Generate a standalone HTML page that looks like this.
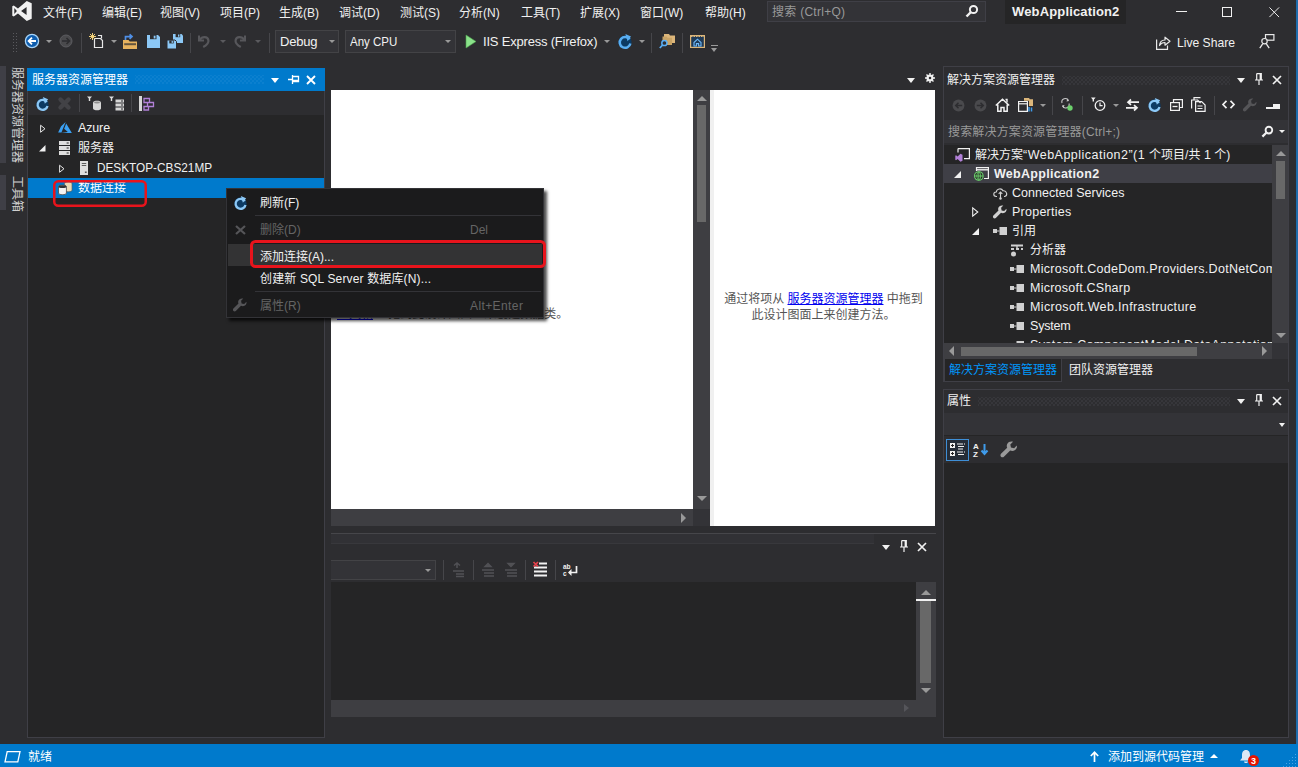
<!DOCTYPE html>
<html lang="zh-CN">
<head>
<meta charset="utf-8">
<title>WebApplication2 - Microsoft Visual Studio</title>
<style>
*{box-sizing:border-box;margin:0;padding:0}
html,body{width:1298px;height:767px;overflow:hidden;background:#2d2d30}
body{position:relative;font-family:"Liberation Sans","Noto Sans CJK SC",sans-serif;font-size:12px;color:#f1f1f1;line-height:1}
.abs{position:absolute}
.t{position:absolute;white-space:nowrap;line-height:16px;height:16px}
svg{position:absolute;overflow:visible}
/* ===== menu bar ===== */
#menubar .t{top:5px;font-size:12px;color:#f1f1f1}
#search{left:767px;top:1px;width:219px;height:21px;background:#333337;border:1px solid #3f3f46}
#search .t{left:4px;top:2px;color:#999}
#sln{left:1005px;top:0;width:121px;height:24px;background:#252526}
#sln .t{left:7px;top:4px;font-weight:bold;font-size:13px;color:#f1f1f1}
/* ===== toolbar ===== */
.combo{position:absolute;top:30px;height:23px;background:#333337;border:1px solid #434346}
.combo .t{left:4px;top:3px;font-size:13px;color:#f1f1f1}
.dd{position:absolute;width:0;height:0;border-left:3px solid transparent;border-right:3px solid transparent;border-top:3px solid #999}
.sep{position:absolute;width:1px;background:#46464a}
/* ===== panels ===== */
.panel{position:absolute;background:#252526;border:1px solid #3f3f46}
.ptitle{position:absolute;height:22px;font-size:12px}
.ptitle .t{top:3px}
.blue{background:#007acc}
/* tree */
.row{position:absolute;left:0;height:19px;width:100%}
.row .t{top:2px;font-size:12px;color:#f1f1f1}
.la{font-size:12.5px !important}
#soltree .t{margin-left:-1px}
.tri-c{position:absolute;width:0;height:0;border-top:4px solid transparent;border-bottom:4px solid transparent;border-left:5px solid #f1f1f1}
.tri-e{position:absolute;width:0;height:0;border-left:6px solid transparent;border-bottom:6px solid #f1f1f1}
/* context menu */
#ctx{left:226px;top:188px;width:318px;height:130px;background:#1b1b1c;border:1px solid #333337;box-shadow:3px 3px 3px rgba(0,0,0,.7)}
#ctx .t{font-size:12px}
#ctx .hl{position:absolute;left:1px;top:55px;width:314px;height:22px;background:#333334}
#ctx .line{position:absolute;left:28px;width:286px;height:1px;background:#333337}
.redbox{position:absolute;border:2px solid #e51400;border-radius:4px}
/* scrollbars */
.sb{position:absolute;background:#3e3e42}
.thumb{position:absolute;background:#686868}
.au{position:absolute;width:0;height:0;border-left:5px solid transparent;border-right:5px solid transparent;border-bottom:5px solid #999}
.ad{position:absolute;width:0;height:0;border-left:5px solid transparent;border-right:5px solid transparent;border-top:5px solid #999}
.al{position:absolute;width:0;height:0;border-top:5px solid transparent;border-bottom:5px solid transparent;border-right:5px solid #999}
.ar{position:absolute;width:0;height:0;border-top:5px solid transparent;border-bottom:5px solid transparent;border-left:5px solid #999}
a{color:#0000ee;text-decoration:underline}
.vt{transform-origin:0 0;transform:rotate(90deg);color:#d0d0d0;font-size:12px}
/* status */
#status{left:0;top:744px;width:1298px;height:23px;background:#007acc}
#status .t{top:5px;color:#fff;font-size:12px}
</style>
</head>
<body>

<!-- ================= MENU BAR ================= -->
<div id="menubar" class="abs" style="left:0;top:0;width:1298px;height:26px">
  <svg width="22" height="22" viewBox="0 0 24 24" style="left:11.2px;top:0.4px"><path fill="#f1f1f1" d="M17.2 1.2 22.6 3.6V20.4L17.2 22.8 7.6 14.6 3 18.1 1.4 17.2V6.8L3 5.9 7.6 9.4ZM17 7.6 11 12l6 4.4ZM3.6 8.8v6.4L6.4 12Z"/></svg>
  <span class="t" style="left:43px">文件(F)</span>
  <span class="t" style="left:102px">编辑(E)</span>
  <span class="t" style="left:160px">视图(V)</span>
  <span class="t" style="left:220px">项目(P)</span>
  <span class="t" style="left:279px">生成(B)</span>
  <span class="t" style="left:339px">调试(D)</span>
  <span class="t" style="left:400px">测试(S)</span>
  <span class="t" style="left:459px">分析(N)</span>
  <span class="t" style="left:521px">工具(T)</span>
  <span class="t" style="left:580px">扩展(X)</span>
  <span class="t" style="left:640px">窗口(W)</span>
  <span class="t" style="left:705px">帮助(H)</span>
  <div id="search" class="abs"><span class="t" style="letter-spacing:0.27px">搜索 (Ctrl+Q)</span>
    <svg width="14" height="14" viewBox="0 0 14 14" style="left:197px;top:2px"><circle cx="8.5" cy="5.5" r="3.6" fill="none" stroke="#f1f1f1" stroke-width="2"/><path d="M6 8 1.5 12.5" stroke="#f1f1f1" stroke-width="2.4"/></svg>
  </div>
  <div id="sln" class="abs"><span class="t" style="letter-spacing:0.15px">WebApplication2</span></div>
  <div class="abs" style="left:1176px;top:11px;width:11px;height:1px;background:#f1f1f1"></div>
  <div class="abs" style="left:1222px;top:7px;width:10px;height:10px;border:1px solid #f1f1f1"></div>
  <svg width="10.5" height="10.5" viewBox="0 0 12 12" style="left:1268.5px;top:6.7px"><path d="M0.5.5 11.5 11.5M11.5.5.5 11.5" stroke="#f1f1f1" stroke-width="1.1"/></svg>
</div>

<!-- ================= TOOLBAR ================= -->
<div id="toolbar" class="abs" style="left:0;top:27px;width:1298px;height:32px">
  <!-- grip -->
  <div class="abs" style="left:12px;top:5px;width:6px;height:21px;background-image:radial-gradient(circle,#5a5a5e 0.8px,transparent 1px);background-size:3px 3px"></div>
  <!-- back -->
  <svg width="16" height="16" viewBox="0 0 16 16" style="left:24px;top:6px"><circle cx="8" cy="8" r="6.6" fill="#0d5cad" stroke="#a8d4f8" stroke-width="1.3"/><path d="M12 8H5M8 4.6 4.6 8 8 11.4" fill="none" stroke="#fff" stroke-width="1.8"/></svg>
  <div class="dd" style="left:46px;top:13px"></div>
  <svg width="14" height="14" viewBox="0 0 14 14" style="left:59px;top:7px"><circle cx="7" cy="7" r="6" fill="#4a4a4d" stroke="#5c5c60" stroke-width="1"/><path d="M3 7h7M7.5 4 10.5 7 7.5 10" fill="none" stroke="#2d2d30" stroke-width="1.6"/></svg>
  <div class="sep" style="left:81px;top:6px;height:20px"></div>
  <!-- new project -->
  <svg width="16" height="16" viewBox="0 0 16 16" style="left:89px;top:6px"><path d="M5.5 5.5h6l2 2v7h-8z" fill="none" stroke="#e8e8e8" stroke-width="1.2"/><path d="M9 2.5h3.5v3" fill="none" stroke="#e8e8e8" stroke-width="1.2"/><path d="M3.5 0v7M0 3.5h7M1 1l5 5M6 1 1 6" stroke="#f3d27a" stroke-width="1"/></svg>
  <div class="dd" style="left:111px;top:13px"></div>
  <!-- open -->
  <svg width="17" height="16" viewBox="0 0 17 16" style="left:122px;top:7px"><path d="M1 15V6h5.500l1.200 1.500H15V15z" fill="#e6b25e"/><path d="M2.200 9.200H14v2H2.200z" fill="#2d2d30" opacity=".7"/><path d="M3.500 6V2.600h5.500M7.600 .4 10 2.600 7.600 4.800" fill="none" stroke="#4f8fe6" stroke-width="1.700"/></svg>
  <!-- save -->
  <svg width="13" height="13" viewBox="0 0 13 13" style="left:147px;top:8px"><path d="M0 0h11l2 2v11H0z" fill="#8cc8f6"/><rect x="3" y="0" width="6.5" height="4.2" fill="#2d2d30"/><rect x="6.7" y=".7" width="1.8" height="2.8" fill="#8cc8f6"/></svg>
  <!-- save all -->
  <svg width="16" height="15" viewBox="0 0 16 15" style="left:167px;top:7px"><path d="M6 0h8.5L16 1.5V9H6z" fill="#8cc8f6"/><rect x="8.6" y="0" width="4.6" height="3.2" fill="#2d2d30"/><rect x="11" y=".5" width="1.4" height="2.2" fill="#8cc8f6"/><path d="M0 6h8l1.5 1.5V15H0z" fill="#8cc8f6" stroke="#2d2d30" stroke-width="1"/><rect x="2.3" y="6.4" width="4.4" height="3" fill="#2d2d30"/><rect x="4.6" y="6.9" width="1.3" height="2" fill="#8cc8f6"/></svg>
  <div class="sep" style="left:190px;top:6px;height:20px"></div>
  <!-- undo -->
  <svg width="14" height="14" viewBox="0 0 14 14" style="left:197px;top:7px"><path d="M2 1.5v5h5" fill="none" stroke="#57575b" stroke-width="2"/><path d="M2.6 6C5 2.2 10.6 2 11.4 6.2 11.9 9 9.6 11.2 6.2 13" fill="none" stroke="#57575b" stroke-width="2.2"/></svg>
  <div class="dd" style="left:220px;top:13px;border-top-color:#5a5a5e"></div>
  <!-- redo -->
  <svg width="14" height="14" viewBox="0 0 14 14" style="left:233px;top:7px"><path d="M12 1.5v5H7" fill="none" stroke="#57575b" stroke-width="2"/><path d="M11.4 6C9 2.2 3.4 2 2.6 6.2 2.1 9 4.4 11.2 7.8 13" fill="none" stroke="#57575b" stroke-width="2.2"/></svg>
  <div class="dd" style="left:255px;top:13px;border-top-color:#5a5a5e"></div>
  <div class="sep" style="left:269px;top:6px;height:20px"></div>
  <div class="combo" style="left:275px;top:3px;width:64px"><span class="t" style="letter-spacing:-0.18px">Debug</span><div class="dd" style="left:53px;top:9px"></div></div>
  <div class="combo" style="left:345px;top:3px;width:111px"><span class="t" style="transform:scaleX(.886);transform-origin:0 0">Any CPU</span><div class="dd" style="left:99px;top:9px"></div></div>
  <!-- play -->
  <svg width="10" height="13" viewBox="0 0 10 13" style="left:466px;top:8px"><path d="M0 0 10 6.5 0 13z" fill="#8ae28a" stroke="#4ea64e" stroke-width=".6"/></svg>
  <span class="t" id="iis" style="left:483px;top:7px;font-size:13px;letter-spacing:-0.2px">IIS Express (Firefox)</span>
  <div class="dd" style="left:604px;top:13px"></div>
  <!-- refresh -->
  <svg width="14" height="15" viewBox="0 0 14 15" style="left:618px;top:7px"><circle cx="7" cy="8" r="6.6" fill="#0c3a63"/><path d="M11.6 5.4A5.4 5.4 0 1 0 12.4 9.6" fill="none" stroke="#59aef2" stroke-width="2.5"/><path d="M7.4 0 13 2.4 9.6 7.2z" fill="#59aef2"/></svg>
  <div class="dd" style="left:639px;top:13px"></div>
  <div class="sep" style="left:651px;top:6px;height:20px"></div>
  <!-- find in files -->
  <svg width="16" height="15" viewBox="0 0 16 15" style="left:659px;top:7px"><path d="M5 0h5l1 1.5H16V9H5z" fill="#dcb67a"/><path d="M3.5 2.5h4l1 1.3H13V11H3.500z" fill="#c9a466"/><circle cx="5.4" cy="9" r="2.6" fill="#2d2d30" stroke="#58aef5" stroke-width="1.5"/><path d="M3.6 11 .8 14" stroke="#58aef5" stroke-width="1.8"/></svg>
  <div class="sep" style="left:682px;top:6px;height:20px"></div>
  <!-- browser -->
  <svg width="15" height="13" viewBox="0 0 15 13" style="left:690px;top:8px"><rect x=".6" y=".6" width="13.8" height="11.8" fill="#1f3a57" stroke="#dcb67a" stroke-width="1.2"/><path d="M1 1h13" stroke="#dcb67a" stroke-width="2" stroke-dasharray="1.5 1"/><path d="M4 7.5 7.5 4.2 11 7.500V11H8.600V8.600H6.400V11H4z" fill="none" stroke="#6fb9f7" stroke-width="1.1"/></svg>
  <div class="abs" style="left:711px;top:18px;width:7px;height:1px;background:#9a9a9a"></div>
  <div class="dd" style="left:711px;top:21px;border-left-width:3.5px;border-right-width:3.5px;border-top-width:4px"></div>
  <!-- live share -->
  <svg width="15" height="15" viewBox="0 0 15 15" style="left:1156px;top:8px"><path d="M.6 4.500V14.400H11.500V10.500" fill="none" stroke="#e8e8e8" stroke-width="1.2"/><path d="M3.500 10.500C3.800 7 6 5 9 5V2.200L14 6.200 9 10.200V7.500C6.500 7.400 4.800 8.300 3.500 10.500z" fill="none" stroke="#e8e8e8" stroke-width="1.2" stroke-linejoin="round"/></svg>
  <span class="t" id="ls" style="left:1177px;top:8px;font-size:13px;transform:scaleX(.933);transform-origin:0 0">Live Share</span>
  <svg width="16" height="15" viewBox="0 0 16 15" style="left:1259px;top:7px"><rect x="6.500" y=".6" width="8.400" height="5.600" fill="none" stroke="#e8e8e8" stroke-width="1.2"/><circle cx="5.500" cy="7.200" r="2.700" fill="#2d2d30" stroke="#e8e8e8" stroke-width="1.2"/><path d="M.8 14.200 3.800 9.600M10.200 14.200 7.200 9.600" stroke="#e8e8e8" stroke-width="1.300"/></svg>
</div>

<!-- ================= LEFT STRIP ================= -->
<div id="leftstrip" class="abs" style="left:0;top:60px;width:27px;height:684px">
  <div class="abs" style="left:0;top:6px;width:6px;height:97px;background:#3f3f46"></div>
  <div class="abs" style="left:0;top:115px;width:6px;height:35px;background:#3f3f46"></div>
  <span class="t vt" style="left:25px;top:7px">服务器资源管理器</span>
  <span class="t vt" style="left:25px;top:116px">工具箱</span>
</div>

<!-- ================= SERVER EXPLORER ================= -->
<div id="srv" class="abs" style="left:27px;top:68px;width:298px;height:670px;background:#252526;border:1px solid #3f3f46;border-top:none">
  <div class="abs blue" style="left:-1px;top:0;width:298px;height:23px">
    <span class="t" style="left:5px;top:4px;color:#fff">服务器资源管理器</span>
    <div class="abs" style="left:108px;top:7px;width:129px;height:9px;background-image:radial-gradient(circle,#3595dc 0.55px,transparent 0.75px),radial-gradient(circle,#3595dc 0.55px,transparent 0.75px);background-size:4px 4px;background-position:0 0,2px 2px"></div>
    <div class="abs" style="left:244px;top:10px;width:0;height:0;border-left:4.500px solid transparent;border-right:4.500px solid transparent;border-top:5px solid #fff"></div>
    <svg width="11" height="9" viewBox="0 0 11 9" style="left:261px;top:7px"><path d="M0 4.500H4M4.500 0v9M4.500 1.500H10.500V6.500H4.500M4.500 5.500H10.500" fill="none" stroke="#fff" stroke-width="1.300"/></svg>
    <svg width="10" height="10" viewBox="0 0 10 10" style="left:279px;top:7px"><path d="M1 1 9 9M9 1 1 9" stroke="#fff" stroke-width="1.900"/></svg>
  </div>
  <!-- toolbar -->
  <div class="abs" style="left:0;top:23px;width:296px;height:24px;background:#2d2d30">
    <svg width="13" height="14" viewBox="0 0 14 15" style="left:8px;top:6px"><circle cx="7" cy="8" r="6.600" fill="#0c3a63"/><path d="M11.600 5.400A5.400 5.400 0 1 0 12.400 9.600" fill="none" stroke="#8cc8f6" stroke-width="2.500"/><path d="M7.400 0 13 2.400 9.600 7.200z" fill="#8cc8f6"/></svg>
    <svg width="13" height="13" viewBox="0 0 13 13" style="left:30px;top:6px"><path d="M2.500 2.500 10.500 10.500M10.500 2.500 2.500 10.500" stroke="#424246" stroke-width="4.4" stroke-linecap="round"/></svg>
    <div class="sep" style="left:51px;top:3px;height:18px"></div>
    <svg width="16" height="15" viewBox="0 0 16 15" style="left:59px;top:5px"><path d="M0 .5h5L3.200 2.600V5H1.800V2.600z" fill="#e0e0e0"/><path d="M6 6.500c0-2.400 8-2.400 8 0V12.500c0 2.400-8 2.400-8 0z" fill="#d6d6d6"/><ellipse cx="10" cy="6.600" rx="3" ry="1" fill="#8e8e8e"/></svg>
    <svg width="16" height="15" viewBox="0 0 16 15" style="left:81px;top:5px"><path d="M0 .5h5L3.200 2.600V5H1.800V2.600z" fill="#e0e0e0"/><path d="M6.500 3.500h8.500v3H6.500zM6.500 7.500h8.500v3H6.500zM6.500 11.500h8.500v3H6.500z" fill="#d6d6d6"/><path d="M12 5h2M12 9h2M12 13h2" stroke="#2d2d30" stroke-width="1"/></svg>
    <div class="sep" style="left:103px;top:3px;height:18px"></div>
    <svg width="16" height="15" viewBox="0 0 16 15" style="left:111px;top:5px"><rect x="0" y="0" width="3" height="15" fill="#d6d6d6"/><path d="M5 2.500h5.500v4H5zM8.500 6.500h6v4h-6zM5 10.500h4.500v3.500H5z" fill="none" stroke="#b180d7" stroke-width="1.300"/></svg>
  </div>
  <!-- tree -->
  <div class="abs" id="srvtree" style="left:0;top:50px;width:296px;height:100px">
    <div class="row" style="top:0"><svg width="6" height="9.500" viewBox="0 0 7 10" style="left:12px;top:5.500px"><path d="M.7.900 5.800 5 .7 9.100z" fill="none" stroke="#f1f1f1" stroke-width="1.100"/></svg>
      <svg width="14" height="11" viewBox="0 0 15 12" style="left:30px;top:4px"><path d="M8.200 0 3.200 4.600 0 11.400h3.600L8.200 0zM8.800 1.600 6.600 7.400l4 3.400-7.400 1.200H15z" fill="#3aa0f3"/></svg>
      <span class="t la" style="left:50px;letter-spacing:-0.14px">Azure</span></div>
    <div class="row" style="top:20px"><svg width="6.500" height="6.500" viewBox="0 0 7 7" style="left:11px;top:6.500px"><path d="M7 0V7H0z" fill="#f1f1f1"/></svg>
      <svg width="11" height="14" viewBox="0 0 13 14" preserveAspectRatio="none" style="left:31px;top:3px"><path d="M0 0h13v4H0zM0 5h13v4H0zM0 10h13v4H0z" fill="#dedede"/><path d="M9 2h2.500M9 7h2.500M9 12h2.500" stroke="#252526" stroke-width="1.200"/></svg>
      <span class="t" style="left:50px">服务器</span></div>
    <div class="row" style="top:40px"><svg width="6" height="9.500" viewBox="0 0 7 10" style="left:31px;top:5.500px"><path d="M.7.900 5.800 5 .7 9.100z" fill="none" stroke="#f1f1f1" stroke-width="1.100"/></svg>
      <svg width="8" height="14" viewBox="0 0 9 14" preserveAspectRatio="none" style="left:52px;top:3px"><rect width="9" height="14" fill="#dedede"/><path d="M2 2.500h5M2 4.500h5" stroke="#555" stroke-width="1"/><rect x="5.500" y="10.500" width="2" height="1.500" fill="#555"/></svg>
      <span class="t la" style="left:69px;transform:scaleX(.943);transform-origin:0 0">DESKTOP-CBS21MP</span></div>
    <div class="row blue" style="top:60px;height:20px">
      <svg width="15" height="13" viewBox="0 0 16 14" style="left:29.500px;top:4px"><path d="M7 1.600c0-2 8-2 8 0V9c0 2-8 2-8 0z" fill="#e8d9b5" stroke="#5a5a5a" stroke-width=".7"/><path d="M.5 5c0-2.200 8.500-2.200 8.500 0v7c0 2.200-8.500 2.200-8.500 0z" fill="#f3f3f3" stroke="#4a4a4a" stroke-width=".9"/><ellipse cx="4.750" cy="5" rx="4.250" ry="1.500" fill="#333" /></svg>
      <span class="t" style="left:50px;color:#fff">数据连接</span></div>
  </div>
</div>
<svg width="94" height="27" style="left:53px;top:180px"><rect x="1.25" y="1.25" width="91.5" height="24.5" rx="4" fill="none" stroke="#e8141c" stroke-width="2.5"/></svg>

<!-- ================= CENTER ================= -->
<div id="center" class="abs" style="left:331px;top:68px;width:605px;height:460px">
  <div class="abs" style="left:576px;top:10px;width:0;height:0;border-left:4.500px solid transparent;border-right:4.500px solid transparent;border-top:5px solid #f1f1f1"></div>
  <svg width="10" height="10" viewBox="0 0 12 12" style="left:593.5px;top:5.3px"><circle cx="6" cy="6" r="3.200" fill="none" stroke="#f1f1f1" stroke-width="2.200"/><path d="M6 0v12M0 6h12M1.800 1.800l8.400 8.400M10.200 1.800 1.800 10.200" stroke="#f1f1f1" stroke-width="1.700"/><circle cx="6" cy="6" r="1.500" fill="#2d2d30"/></svg>
  <!-- left white pane -->
  <div class="abs" style="left:0;top:22px;width:362px;height:419px;background:#fff;color:#555;font-size:12px">
    <div class="abs" style="left:6px;top:168px;width:350px;line-height:16px;white-space:nowrap">对象关系设计器允许你在代码中<br>将数据类可视化。<br>通过将项从 <a>服务器资源管理器</a> 或<br><a>工具箱</a> <span id="lastline" style="margin-left:12px">拖到此设计图面上来创建数据类。</span></div>
  </div>
  <!-- v scrollbar -->
  <div class="sb" style="left:362px;top:22px;width:17px;height:419px">
    <div class="au" style="left:3.500px;top:6px"></div>
    <div class="thumb" style="left:4px;top:15px;width:9px;height:117px"></div>
    <div class="ad" style="left:3.500px;top:406px"></div>
  </div>
  <!-- h scrollbar -->
  <div class="sb" style="left:0;top:441px;width:362px;height:17px"><div class="ar" style="left:350px;top:3.500px"></div></div>
  <div class="abs" style="left:362px;top:441px;width:17px;height:17px;background:#333337"></div>
  <!-- right white pane -->
  <div class="abs" style="left:379px;top:22px;width:225px;height:436px;background:#fff;color:#555;font-size:12px;text-align:center;border-left:4px solid #f0f0f0">
    <div class="abs" style="left:-1.5px;top:202px;width:222px;line-height:15.500px;white-space:nowrap;text-align:center">通过将项从 <a>服务器资源管理器</a> 中拖到<br>此设计图面上来创建方法。</div>
  </div>
</div>

<!-- ================= OUTPUT ================= -->
<div id="output" class="abs" style="left:331px;top:533px;width:605px;height:205px;border-top:1px solid #46464a">
  <div class="abs" style="left:0;top:0;width:543px;height:10px;background:#313135;border-bottom:1px solid #38383c"></div>
  <div class="abs" style="left:0;top:1px;width:605px;height:203px">
    <div class="abs" style="left:551px;top:10px;width:0;height:0;border-left:4.500px solid transparent;border-right:4.500px solid transparent;border-top:5px solid #f1f1f1"></div>
    <svg width="8" height="12" viewBox="0 0 8 12" style="left:569px;top:5px"><path d="M1.700 .6h4.600v6.200M1.700 .6v6.200M5.200 .6v6.200M0 7h8M4 7v5" fill="none" stroke="#f1f1f1" stroke-width="1.200"/></svg>
    <svg width="10" height="10" viewBox="0 0 10 10" style="left:586px;top:7px"><path d="M1 1 9 9M9 1 1 9" stroke="#f1f1f1" stroke-width="1.700"/></svg>
  <!-- toolbar -->
  <div class="abs" style="left:0;top:25px;width:105px;height:20px;background:#333337;border:1px solid #434346;border-left:none"><div class="dd" style="left:94px;top:8px"></div></div>
  <div class="sep" style="left:112px;top:25px;height:20px"></div>
  <svg width="13" height="15" viewBox="0 0 13 15" style="left:121px;top:27px"><path d="M2 3.500 5 1 8 3.500M5 1v5M1 9h11M4 12h8M4 14.500h8" fill="none" stroke="#515155" stroke-width="1.500"/></svg>
  <div class="sep" style="left:142px;top:25px;height:20px"></div>
  <svg width="12" height="15" viewBox="0 0 12 15" style="left:151px;top:27px"><path d="M3 4.500 6 1.500 9 4.500zM0 8h12M2 11h10M2 14h10" fill="#515155" stroke="#515155" stroke-width="1.400"/></svg>
  <svg width="12" height="15" viewBox="0 0 12 15" style="left:174px;top:27px"><path d="M3 1.500 6 4.500 9 1.500zM0 8h12M2 11h10M2 14h10" fill="#515155" stroke="#515155" stroke-width="1.400"/></svg>
  <div class="sep" style="left:194px;top:25px;height:20px"></div>
  <svg width="14" height="15" viewBox="0 0 14 15" style="left:202px;top:27px"><path d="M6 1.500h8M1 5.500h13M1 9.500h13M1 13.500h13" stroke="#f1f1f1" stroke-width="2"/><path d="M.5 0 5 4.500M5 0 .5 4.500" stroke="#e8414b" stroke-width="1.700"/></svg>
  <div class="sep" style="left:224px;top:25px;height:20px"></div>
  <svg width="15" height="13" viewBox="0 0 15 13" style="left:232px;top:29px"><text x="0" y="5" font-size="6.500" font-weight="bold" font-family="Liberation Sans, sans-serif" fill="#f1f1f1">ab</text><text x="0" y="11.500" font-size="6.500" font-weight="bold" font-family="Liberation Sans, sans-serif" fill="#f1f1f1">c</text><path d="M13.500 2v6.500H6" fill="none" stroke="#f1f1f1" stroke-width="1.700"/><path d="M8.500 5 5 8.500 8.500 12z" fill="#f1f1f1"/></svg>
  <!-- content -->
  <div class="abs" style="left:0;top:47px;width:585px;height:118px;background:#252526"></div>
  <div class="sb" style="left:585px;top:47px;width:20px;height:118px">
    <div class="au" style="left:5px;top:8px"></div>
    <div class="abs" style="left:0;top:17px;width:20px;height:2px;background:#f1f1f1"></div>
    <div class="thumb" style="left:4px;top:19px;width:11px;height:82px"></div>
    <div class="ad" style="left:5px;top:106px"></div>
  </div>
  <div class="sb" style="left:0;top:165px;width:605px;height:17px"><div class="ar" style="left:573px;top:4px;border-left-color:#55555a;border-top-width:4.500px;border-bottom-width:4.500px"></div></div>
</div>
</div>

<!-- ================= SOLUTION EXPLORER ================= -->
<div id="sol" class="abs" style="left:943px;top:66px;width:346px;height:316px;border:1px solid #3f3f46;border-bottom:none">
  <span class="t" style="left:3px;top:5px">解决方案资源管理器</span>
  <div class="abs" style="left:118px;top:9px;width:168px;height:9px;background-image:radial-gradient(circle,#414146 0.6px,transparent 0.8px),radial-gradient(circle,#414146 0.6px,transparent 0.8px);background-size:4px 4px;background-position:0 0,2px 2px"></div>
    <div class="abs" style="left:293px;top:11px;width:0;height:0;border-left:4.500px solid transparent;border-right:4.500px solid transparent;border-top:5px solid #f1f1f1"></div>
    <svg width="8" height="12" viewBox="0 0 8 12" style="left:311px;top:6px"><path d="M1.700 .6h4.600v6.200M1.700 .6v6.200M5.200 .6v6.200M0 7h8M4 7v5" fill="none" stroke="#f1f1f1" stroke-width="1.200"/></svg>
    <svg width="10" height="10" viewBox="0 0 10 10" style="left:328px;top:8px"><path d="M1 1 9 9M9 1 1 9" stroke="#f1f1f1" stroke-width="1.700"/></svg>
  <!-- toolbar -->
  <div class="abs" id="soltb" style="left:0;top:25px;width:344px;height:26px">
    <svg width="13" height="13" viewBox="0 0 14 14" style="left:8px;top:6.500px"><circle cx="7" cy="7" r="6.400" fill="#4a4a4d"/><path d="M11 7H4M7 4 4 7 7 10" fill="none" stroke="#2d2d30" stroke-width="1.600"/></svg>
    <svg width="13" height="13" viewBox="0 0 14 14" style="left:30px;top:6.500px"><circle cx="7" cy="7" r="6.400" fill="#4a4a4d"/><path d="M3 7h7M7 4 10 7 7 10" fill="none" stroke="#2d2d30" stroke-width="1.600"/></svg>
    <svg width="15" height="14" viewBox="0 0 15 14" style="left:51px;top:6px"><path d="M.8 7.500 7.500 1.200 14.200 7.500M2.800 6.500V13.300H6V9.500H9V13.300H12.200V6.500" fill="none" stroke="#f1f1f1" stroke-width="1.500"/><path d="M10.500 1.500h1.500v3" stroke="#f1f1f1" stroke-width="1.400" fill="none"/></svg>
    <svg width="15" height="14" viewBox="0 0 15 14" style="left:74px;top:6px"><path d="M.6 3.500h8.800V13.400H.6z" fill="none" stroke="#f1f1f1" stroke-width="1.200"/><path d="M.6 5.800h8.800" stroke="#f1f1f1" stroke-width="1.200"/><path d="M6 0h5l.8 1.200H15V8h-4V2.800H6z" fill="#dcb67a"/><path d="M11 9v4.500M13.500 9.500v4" stroke="#3f9bea" stroke-width="1.500"/></svg>
    <div class="dd" style="left:96px;top:12px"></div>
    <div class="sep" style="left:108px;top:4px;height:19px"></div>
    <svg width="13" height="14" viewBox="0 0 13 14" style="left:116px;top:5px"><path d="M2 6A3.500 3.500 0 0 1 8.500 3.500M9 6.500A3.500 3.500 0 0 1 2.500 9" fill="none" stroke="#c8c8c8" stroke-width="1.100"/><path d="M7.500 1.500 9 4 6.500 4.500zM3.500 11 2 8.500 4.500 8z" fill="#c8c8c8"/><circle cx="10" cy="11" r="2.700" fill="#6cd16c"/></svg>
    <div class="sep" style="left:138px;top:4px;height:19px"></div>
    <svg width="15" height="14" viewBox="0 0 15 14" style="left:147px;top:5px"><path d="M0 .600h4.600L3 2.400V4.400H1.600V2.400z" fill="#f1f1f1"/><circle cx="9" cy="8.500" r="4.800" fill="none" stroke="#f1f1f1" stroke-width="1.300"/><path d="M9 5.500v3.200h2.600" fill="none" stroke="#f1f1f1" stroke-width="1.200"/></svg>
    <div class="dd" style="left:169px;top:12px"></div>
    <svg width="13" height="12" viewBox="0 0 13 12" style="left:182px;top:7px"><path d="M13 3.200H2.500M5 .5 2 3.200 5 5.900M0 8.800H10.500M8 6.100 11 8.800 8 11.500" fill="none" stroke="#f1f1f1" stroke-width="1.700"/></svg>
    <svg width="13" height="14" viewBox="0 0 14 15" style="left:204px;top:6px"><circle cx="7" cy="8" r="6.600" fill="#0c3a63"/><path d="M11.600 5.400A5.400 5.400 0 1 0 12.400 9.600" fill="none" stroke="#8cc8f6" stroke-width="2.500"/><path d="M7.400 0 13 2.400 9.600 7.200z" fill="#8cc8f6"/></svg>
    <svg width="13" height="12" viewBox="0 0 13 12" style="left:226px;top:7px"><path d="M3.500 3.500V.6H12.400V8.500H9.500" fill="none" stroke="#f1f1f1" stroke-width="1.200"/><rect x=".6" y="3.600" width="8.800" height="7.800" fill="none" stroke="#f1f1f1" stroke-width="1.200"/><path d="M2.500 7.500h5" stroke="#f1f1f1" stroke-width="1.300"/></svg>
    <svg width="15" height="15" viewBox="0 0 15 15" style="left:247px;top:5px"><path d="M3 3V.600H9.500M.6 11.500V3h6l3 3" fill="none" stroke="#f1f1f1" stroke-width="1.200"/><path d="M4.600 4.600h6l3.500 3.500v6.300H4.600z" fill="none" stroke="#f1f1f1" stroke-width="1.200"/><path d="M6.500 9h5M6.500 11.500h5" stroke="#f1f1f1" stroke-width="1"/></svg>
    <div class="sep" style="left:270px;top:4px;height:19px"></div>
    <svg width="13" height="9" viewBox="0 0 13 9" style="left:278px;top:8px"><path d="M4.500 .8 1 4.500 4.500 8.200M8.500 .8 12 4.500 8.500 8.200" fill="none" stroke="#f1f1f1" stroke-width="1.700"/></svg>
    <svg width="14" height="14" viewBox="0 0 14 14" style="left:299px;top:6px"><path d="M13.400 3.700 11.200 5.900 8.600 5.400 8.100 2.800 10.300 .6C8.500 0 6.400.600 5.500 2.400 5 3.500 5.100 4.600 5.500 5.500L.4 10.600C-.2 11.200-.2 12.300.4 13 1.100 13.600 2.200 13.600 2.800 13L8 7.800C9.200 8.400 10.800 8.300 12 7.400 13.300 6.500 13.800 5 13.400 3.700z" fill="#555558"/></svg>
    <div class="abs" style="left:322px;top:15px;width:8px;height:2px;background:#f1f1f1"></div>
    <div class="abs" style="left:329px;top:12px;width:7px;height:5px;background:#f1f1f1"></div>
  </div>
  <!-- search -->
  <div class="abs" style="left:0;top:53px;width:344px;height:23px;background:#333337">
    <span class="t" id="solsearch" style="left:4px;top:4px;color:#999;letter-spacing:0.16px">搜索解决方案资源管理器(Ctrl+;)</span>
    <svg width="13" height="13" viewBox="0 0 14 14" style="left:317px;top:5px"><circle cx="8.500" cy="5.500" r="3.600" fill="none" stroke="#f1f1f1" stroke-width="2"/><path d="M6 8 1.500 12.500" stroke="#f1f1f1" stroke-width="2.400"/></svg>
    <div class="dd" style="left:335px;top:10px;border-top-color:#f1f1f1"></div>
  </div>
  <!-- tree -->
  <div class="abs" id="soltree" style="left:0;top:78px;width:328px;height:198px;background:#252526;overflow:hidden">
    <div class="row" style="top:0"><svg width="15" height="14" viewBox="0 0 15 14" style="left:11px;top:3px"><path d="M3 .600h11.400v10H9" fill="none" stroke="#f1f1f1" stroke-width="1.200"/><path d="M3 .600v4" stroke="#f1f1f1" stroke-width="1.200"/><path d="M5.500 5.800 7.500 6.700V12.800L5.500 13.700 2.600 11 1 12.200.3 11.800V7.700L1 7.300 2.600 8.500z" fill="#b180d7"/></svg>
      <span class="t" id="s0" style="left:32px">解决方案<span class="la" style="letter-spacing:0.48px">“WebApplication2”(1 </span>个项目/共<span class="la"> 1 </span>个)</span></div>
    <div class="row" style="top:19px;background:#3f3f46"><svg width="7" height="7" viewBox="0 0 7 7" style="left:10px;top:7px"><path d="M7 0V7H0z" fill="#f1f1f1"/></svg>
      <svg width="15" height="14" viewBox="0 0 15 14" style="left:30px;top:3px"><path d="M2.500 4V.600H14.400V11.500H10" fill="none" stroke="#f1f1f1" stroke-width="1.200"/><path d="M2.500 2.800H14" stroke="#f1f1f1" stroke-width="1.400"/><circle cx="4.800" cy="9" r="4.300" fill="#252526" stroke="#6cd16c" stroke-width="1.100"/><path d="M.5 9h8.600M4.800 4.700v8.600M4.800 4.700c-2.600 2-2.600 6.600 0 8.600M4.800 4.700c2.600 2 2.600 6.600 0 8.600" fill="none" stroke="#6cd16c" stroke-width=".9"/></svg>
      <span class="t la" id="s1" style="left:51px;font-weight:bold;letter-spacing:0.28px">WebApplication2</span></div>
    <div class="row" style="top:38px"><svg width="15" height="13" viewBox="0 0 15 13" style="left:49px;top:4px"><path d="M4 9.500H3.200C-.3 9.200.2 4.800 3.300 5 3.600 1.600 8.500.6 10 3.800 13.800 3.200 15.200 8.500 11.600 9.500H11" fill="none" stroke="#d0d0d0" stroke-width="1.100"/><path d="M7.500 5v6M5.700 6.800 7.500 5 9.300 6.800" fill="none" stroke="#d0d0d0" stroke-width="1.100"/><circle cx="7.500" cy="11.500" r="1.200" fill="#d0d0d0"/></svg>
      <span class="t la" id="s2" style="left:69px;letter-spacing:0.03px">Connected Services</span></div>
    <div class="row" style="top:57px"><svg width="7" height="10" viewBox="0 0 7 10" style="left:28px;top:5px"><path d="M.7.900 5.800 5 .7 9.100z" fill="none" stroke="#f1f1f1" stroke-width="1.100"/></svg>
      <svg width="14" height="14" viewBox="0 0 14 14" style="left:49px;top:3px"><path d="M13.400 3.700 11.200 5.900 8.600 5.400 8.100 2.800 10.300 .6C8.500 0 6.400.600 5.500 2.400 5 3.500 5.100 4.600 5.500 5.500L.4 10.600C-.2 11.200-.2 12.300.4 13 1.100 13.600 2.200 13.600 2.800 13L8 7.800C9.200 8.400 10.800 8.300 12 7.400 13.300 6.500 13.800 5 13.400 3.700z" fill="#d0d0d0"/></svg>
      <span class="t la" id="s3" style="left:69px;letter-spacing:0.25px">Properties</span></div>
    <div class="row" style="top:76px"><svg width="7" height="7" viewBox="0 0 7 7" style="left:28px;top:7px"><path d="M7 0V7H0z" fill="#f1f1f1"/></svg>
      <svg width="14" height="8" viewBox="0 0 14 8" style="left:49px;top:6px"><rect x="0" y="2" width="4" height="4" fill="#d0d0d0"/><rect x="4" y="3.500" width="2.500" height="1" fill="#d0d0d0"/><rect x="6.500" y="0" width="7.500" height="8" fill="#d0d0d0"/></svg>
      <span class="t" style="left:69px">引用</span></div>
    <div class="row" style="top:95px"><svg width="14" height="13" viewBox="0 0 14 13" style="left:66px;top:4px"><path d="M1 1.500h12M1 5h3M6 5h3M11 5h2" stroke="#d0d0d0" stroke-width="2.200"/><circle cx="3.500" cy="10" r="2.500" fill="#d0d0d0"/><path d="M7 1.500v3.500" stroke="#d0d0d0" stroke-width="1.400"/></svg>
      <span class="t" style="left:87px">分析器</span></div>
    <div class="row" style="top:114px"><svg width="14" height="8" viewBox="0 0 14 8" style="left:66px;top:6px"><rect x="0" y="2" width="4" height="4" fill="#d0d0d0"/><rect x="4" y="3.500" width="2.500" height="1" fill="#d0d0d0"/><rect x="6.500" y="0" width="7.500" height="8" fill="#d0d0d0"/></svg><span class="t la" id="s6" style="left:87px;letter-spacing:0.3px">Microsoft.CodeDom.Providers.DotNetCompilerPlatform</span></div>
    <div class="row" style="top:133px"><svg width="14" height="8" viewBox="0 0 14 8" style="left:66px;top:6px"><rect x="0" y="2" width="4" height="4" fill="#d0d0d0"/><rect x="4" y="3.500" width="2.500" height="1" fill="#d0d0d0"/><rect x="6.500" y="0" width="7.500" height="8" fill="#d0d0d0"/></svg><span class="t la" id="s7" style="left:87px;letter-spacing:0.24px">Microsoft.CSharp</span></div>
    <div class="row" style="top:152px"><svg width="14" height="8" viewBox="0 0 14 8" style="left:66px;top:6px"><rect x="0" y="2" width="4" height="4" fill="#d0d0d0"/><rect x="4" y="3.500" width="2.500" height="1" fill="#d0d0d0"/><rect x="6.500" y="0" width="7.500" height="8" fill="#d0d0d0"/></svg><span class="t la" id="s8" style="left:87px;letter-spacing:0.35px">Microsoft.Web.Infrastructure</span></div>
    <div class="row" style="top:171px"><svg width="14" height="8" viewBox="0 0 14 8" style="left:66px;top:6px"><rect x="0" y="2" width="4" height="4" fill="#d0d0d0"/><rect x="4" y="3.500" width="2.500" height="1" fill="#d0d0d0"/><rect x="6.500" y="0" width="7.500" height="8" fill="#d0d0d0"/></svg><span class="t la" id="s9" style="left:87px;letter-spacing:-0.2px">System</span></div>
    <div class="row" style="top:190px"><svg width="14" height="8" viewBox="0 0 14 8" style="left:66px;top:6px"><rect x="0" y="2" width="4" height="4" fill="#d0d0d0"/><rect x="4" y="3.500" width="2.500" height="1" fill="#d0d0d0"/><rect x="6.500" y="0" width="7.500" height="8" fill="#d0d0d0"/></svg><span class="t la" id="s10" style="left:87px;letter-spacing:0.3px">System.ComponentModel.DataAnnotations</span></div>
  </div>
  <div class="sb" style="left:328px;top:78px;width:16px;height:198px">
    <div class="au" style="left:3.500px;top:6px"></div>
    <div class="thumb" style="left:4px;top:16px;width:9px;height:38px"></div>
    <div class="ad" style="left:3.500px;top:188px"></div>
  </div>
  <div class="sb" style="left:0;top:276px;width:328px;height:16px">
    <div class="al" style="left:5px;top:3px"></div>
    <div class="thumb" style="left:17px;top:4px;width:236px;height:9px"></div>
    <div class="ar" style="left:318px;top:3px"></div>
  </div>
  <div class="abs" style="left:328px;top:276px;width:16px;height:16px;background:#333337"></div>
  <!-- tabs -->
  <div class="abs" style="left:0;top:292px;width:118px;height:23px;background:#252526;border:1px solid #3f3f46;border-top:none"><span class="t" style="left:4px;top:3px;color:#0097fb">解决方案资源管理器</span></div>
  <span class="t" style="left:125px;top:295px">团队资源管理器</span>
</div>

<!-- ================= PROPERTIES ================= -->
<div id="props" class="abs" style="left:943px;top:389px;width:346px;height:349px;border:1px solid #3f3f46;background:#252526">
  <div class="abs" style="left:0;top:0;width:344px;height:23px;background:#2d2d30"></div>
  <span class="t" style="left:3px;top:3px">属性</span>
  <div class="abs" style="left:34px;top:7px;width:252px;height:9px;background-image:radial-gradient(circle,#414146 0.6px,transparent 0.8px),radial-gradient(circle,#414146 0.6px,transparent 0.8px);background-size:4px 4px;background-position:0 0,2px 2px"></div>
    <div class="abs" style="left:293px;top:9px;width:0;height:0;border-left:4.500px solid transparent;border-right:4.500px solid transparent;border-top:5px solid #f1f1f1"></div>
    <svg width="8" height="12" viewBox="0 0 8 12" style="left:311px;top:4px"><path d="M1.700 .6h4.600v6.200M1.700 .6v6.200M5.200 .6v6.200M0 7h8M4 7v5" fill="none" stroke="#f1f1f1" stroke-width="1.200"/></svg>
    <svg width="10" height="10" viewBox="0 0 10 10" style="left:328px;top:6px"><path d="M1 1 9 9M9 1 1 9" stroke="#f1f1f1" stroke-width="1.700"/></svg>
  <div class="abs" style="left:0;top:23px;width:344px;height:22px;background:#333337"><div class="dd" style="left:335px;top:10px;border-top-color:#f1f1f1;border-left-width:3.500px;border-right-width:3.500px;border-top-width:4px"></div></div>
  <div class="abs" style="left:0;top:46px;width:344px;height:27px;background:#2d2d30">
    <div class="abs" style="left:2px;top:3px;width:23px;height:22px;border:1px solid #3f8fd6;background:#252d38"></div>
    <svg width="16" height="14" viewBox="0 0 16 14" style="left:6px;top:7px"><rect x="0" y="0" width="5" height="5" fill="#f1f1f1"/><rect x="0" y="8" width="5" height="5" fill="#f1f1f1"/><path d="M1 2.500h3M2.500 1v3M1 10.500h3M2.500 9v3" stroke="#252526" stroke-width="1"/><path d="M7 1h8M8 3.500h7M8 6h5M7 9h8M8 11.500h7" stroke="#f1f1f1" stroke-width="1.200" stroke-dasharray="6 1"/></svg>
    <svg width="16" height="15" viewBox="0 0 16 15" style="left:29px;top:6px"><text x="0" y="6.500" font-size="8" font-weight="bold" font-family="Liberation Sans, sans-serif" fill="#f1f1f1">A</text><text x="0" y="14.500" font-size="8" font-weight="bold" font-family="Liberation Sans, sans-serif" fill="#f1f1f1">Z</text><path d="M11.500 2v9M8.500 8.500 11.500 12 14.500 8.500" fill="none" stroke="#3f9bea" stroke-width="2"/></svg>
    <svg width="18" height="17" viewBox="0 0 14 14" style="left:56px;top:5px"><path d="M13.400 3.700 11.200 5.900 8.600 5.400 8.100 2.800 10.300 .6C8.500 0 6.400.600 5.500 2.400 5 3.500 5.100 4.600 5.500 5.500L.4 10.600C-.2 11.200-.2 12.300.4 13 1.100 13.600 2.200 13.600 2.800 13L8 7.800C9.200 8.400 10.800 8.300 12 7.400 13.300 6.500 13.800 5 13.400 3.700z" fill="#9a9a9a"/></svg>
  </div>
</div>

<!-- ================= CONTEXT MENU ================= -->
<div id="ctx" class="abs">
  <div class="hl"></div>
  <svg width="13" height="14" viewBox="0 0 14 15" style="left:7px;top:7px"><circle cx="7" cy="8" r="6.600" fill="#0c3a63"/><path d="M11.600 5.400A5.400 5.400 0 1 0 12.400 9.600" fill="none" stroke="#8cc8f6" stroke-width="2.500"/><path d="M7.400 0 13 2.400 9.600 7.200z" fill="#8cc8f6"/></svg>
  <span class="t" style="left:33px;top:6px">刷新(F)</span>
  <div class="line" style="top:26px"></div>
  <svg width="11" height="10" viewBox="0 0 11 10" style="left:8px;top:36px"><path d="M1 1 10 9M10 1 1 9" stroke="#555558" stroke-width="2.200"/></svg>
  <span class="t" style="left:33px;top:33px;color:#656565">删除(D)</span>
  <span class="t" style="left:243px;top:33px;color:#656565">Del</span>
  <span class="t" style="left:33px;top:60px">添加连接(A)...</span>
  <span class="t" id="c4" style="left:33px;top:82px;letter-spacing:0.15px">创建新 SQL Server 数据库(N)...</span>
  <div class="line" style="top:102px"></div>
  <svg width="14" height="14" viewBox="0 0 14 14" style="left:6px;top:109px"><path d="M13.400 3.700 11.200 5.900 8.600 5.400 8.100 2.800 10.300 .6C8.500 0 6.400.600 5.500 2.400 5 3.500 5.100 4.600 5.500 5.500L.4 10.600C-.2 11.200-.2 12.300.4 13 1.100 13.600 2.200 13.600 2.800 13L8 7.800C9.200 8.400 10.800 8.300 12 7.400 13.300 6.500 13.800 5 13.400 3.700z" fill="#555558"/></svg>
  <span class="t" style="left:33px;top:109px;color:#656565">属性(R)</span>
  <span class="t" style="left:243px;top:109px;color:#656565;letter-spacing:0.4px">Alt+Enter</span>
</div>
<svg width="296" height="28" style="left:250px;top:240px"><rect x="1.5" y="1.5" width="293" height="25" rx="4" fill="none" stroke="#e8141c" stroke-width="3"/></svg>

<!-- ================= STATUS BAR ================= -->
<div id="status" class="abs">
  <svg width="17" height="11.5" viewBox="0 0 17 12" preserveAspectRatio="none" style="left:4px;top:7px"><path d="M3.200 .7H16L13.800 11.300H1z" fill="none" stroke="#fff" stroke-width="1.300"/></svg>
  <span class="t" style="left:28px">就绪</span>
  <svg width="9" height="11" viewBox="0 0 9 11" style="left:1090px;top:7px"><path d="M4.500 11V1.500M.8 5 4.500 1.200 8.200 5" fill="none" stroke="#fff" stroke-width="1.700"/></svg>
  <span class="t" style="left:1108px">添加到源代码管理</span>
  <div class="abs" style="left:1210px;top:10px;width:0;height:0;border-left:4px solid transparent;border-right:4px solid transparent;border-bottom:4.500px solid #fff"></div>
  <svg width="12" height="13" viewBox="0 0 12 13" style="left:1240px;top:6px"><path d="M6 0C3 0 2 2.500 2 5v3L0 10.500h12L10 8V5C10 2.500 9 0 6 0z" fill="#dce9f5"/><path d="M4 11.500h4c0 2-4 2-4 0z" fill="#dce9f5"/></svg>
  <div class="abs" style="left:1248px;top:11px;width:11px;height:11px;border-radius:50%;background:#e51400"></div>
  <span class="t" style="left:1251px;top:8.5px;font-size:9px;font-weight:bold;color:#fff">3</span>
  <div class="abs" style="left:1282px;top:9px;width:14px;height:14px;background-image:radial-gradient(circle,#4aa3e6 0.8px,transparent 1px);background-size:3px 3px;clip-path:polygon(100% 0,100% 100%,0 100%)"></div>
</div>
<div class="abs" style="left:1296px;top:0;width:2px;height:744px;background:#1f6cab"></div>

</body>
</html>
